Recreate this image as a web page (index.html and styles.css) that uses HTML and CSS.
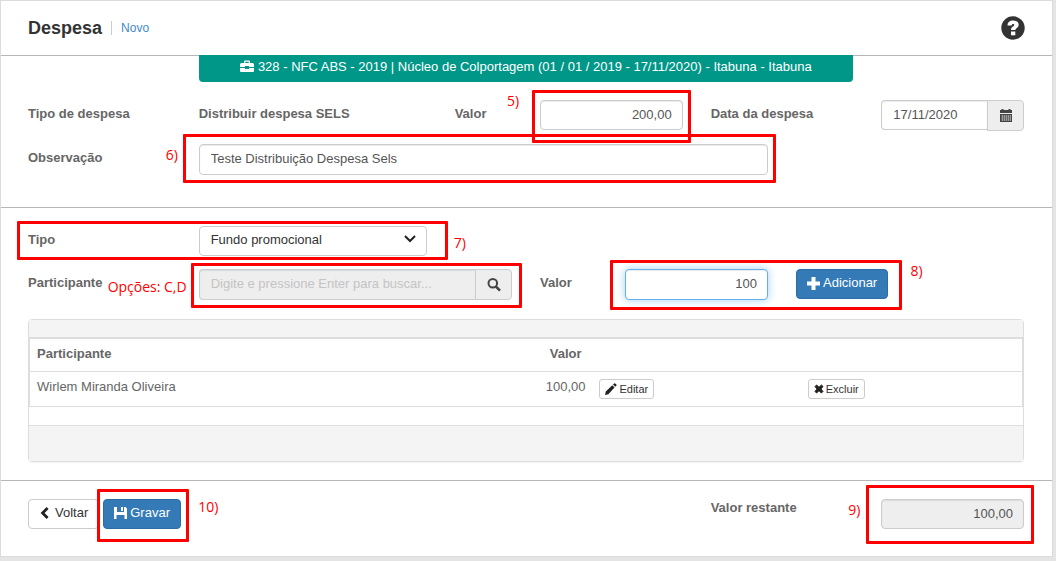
FILE: index.html
```html
<!DOCTYPE html>
<html lang="pt-BR">
<head>
<meta charset="utf-8">
<meta name="viewport" content="width=device-width, initial-scale=1">
<title>Despesa</title>
<link rel="stylesheet" href="styles.css">
</head>
<body>
<main class="page">
  <header class="header">
    <h1 class="title">Despesa</h1>
    <a class="subtitle" href="#">Novo</a>
    <button class="help" type="button" aria-label="Ajuda">
      <svg width="24" height="24" viewBox="0 0 24 24"><circle cx="12" cy="12" r="11.7" fill="#333"/><path d="M6.500 9.600C6.500 6.200 8.800 4.500 12.200 4.500c3.200 0 5.500 1.600 5.500 4.300 0 3.300-3.400 3.100-3.400 5.300h-4.300c0-3.600 3.200-3.400 3.200-5.100 0-.7-.5-1-1.200-1-.9 0-1.300.6-1.300 1.600z" fill="#fff"/><path d="M10 15.500h4.300v3.800H10z" fill="#fff"/></svg>
    </button>
  </header>

  <form class="form">
    <section class="section section-top">
      <div class="row">
        <div class="cell start-3 span-8">
          <div class="banner">
            <svg class="icon" width="14" height="13" viewBox="0 0 14 13" fill="#fff"><path d="M4 3V1.500Q4 .5 5 .5h4q1 0 1 1V3h2.500Q14 3 14 4.500V7H9V6H5v1H0V4.500Q0 3 1.500 3zM5.300 3h3.400V1.800H5.300zM0 8h5v1h4V8h5v3q0 1-1 1H1q-1 0-1-1z"/></svg>
            328 - NFC ABS - 2019 | Núcleo de Colportagem (01 / 01 / 2019 - 17/11/2020) - Itabuna - Itabuna
          </div>
        </div>
      </div>
      <div class="row row-main">
        <div class="cell span-2"><span class="label">Tipo de despesa</span></div>
        <div class="cell span-3"><span class="label">Distribuir despesa SELS</span></div>
        <div class="cell span-1">
          <label class="label" for="valor">Valor</label>
        </div>
        <div class="cell span-2">
          <input class="control number" id="valor" type="text" value="200,00">
          <span class="mark mark-5"></span><span class="note note-5">5)</span>
        </div>
        <div class="cell span-2"><label class="label" for="data">Data da despesa</label></div>
        <div class="cell span-2">
          <div class="group">
            <input class="control" id="data" type="text" value="17/11/2020">
            <button class="addon" type="button" aria-label="Abrir calendário">
              <svg width="14" height="14" viewBox="0 0 14 14"><path fill="#444" d="M1 1h1.500V0h2v1h5V0h2v1H13v3H1zM1 5h12v8H1z"/><path d="M2 7h10M2 9h10M2 11h10M3.500 6v6M5.500 6v6M7.500 6v6M9.500 6v6M11.500 6v6" stroke="#eee" stroke-width=".4"/></svg>
            </button>
          </div>
        </div>
      </div>
      <div class="row">
        <div class="cell span-2"><label class="label" for="obs">Observação</label></div>
        <div class="cell span-7">
          <input class="control tall" id="obs" type="text" value="Teste Distribuição Despesa Sels">
          <span class="mark mark-6"></span><span class="note note-6">6)</span>
        </div>
      </div>
    </section>

    <section class="section section-middle">
      <div class="row row-tipo">
        <div class="cell span-2"><label class="label" for="tipo">Tipo</label></div>
        <div class="cell span-3">
          <div class="select-box">
            <select class="control select" id="tipo"><option>Fundo promocional</option></select>
            <svg class="chevron" width="12" height="8" viewBox="0 0 12 8"><path d="M1 1l5 5 5-5" fill="none" stroke="#222" stroke-width="2"/></svg>
          </div>
          <span class="note note-7">7)</span>
        </div>
        <span class="mark mark-7"></span>
      </div>
      <div class="row">
        <div class="cell span-2"><label class="label" for="participante">Participante</label></div>
        <div class="cell span-4">
          <div class="group">
            <input class="control tall" id="participante" type="text" placeholder="Digite e pressione Enter para buscar..." disabled>
            <button class="addon" type="button" aria-label="Buscar">
              <svg width="14" height="14" viewBox="0 0 14 14" fill="none" stroke="#444"><circle cx="5.800" cy="5.300" r="4.300" stroke-width="2"/><path d="M9 8.600l4 4" stroke-width="2.600"/></svg>
            </button>
          </div>
          <span class="mark mark-search"></span><span class="note note-search">Opções: C,D</span>
        </div>
        <div class="cell span-1"><label class="label" for="valor-item">Valor</label></div>
        <div class="cell span-2"><input class="control tall number focused" id="valor-item" type="text" value="100"></div>
        <div class="cell span-2">
          <button class="button primary" type="button">
            <svg class="icon" width="13" height="13" viewBox="0 0 13 13"><path d="M4.500 0h4v4.500H13v4H8.500V13h-4V8.500H0v-4h4.500z" fill="#fff"/></svg>
            Adicionar
          </button>
          <span class="note note-8">8)</span>
        </div>
        <span class="mark mark-8"></span>
      </div>

      <div class="panel">
        <div class="panel-head"></div>
        <table class="table">
          <thead>
            <tr><th class="col-name">Participante</th><th class="col-value">Valor</th><th class="col-edit"></th><th></th></tr>
          </thead>
          <tbody>
            <tr>
              <td>Wirlem Miranda Oliveira</td>
              <td class="col-value">100,00</td>
              <td class="col-action"><button class="button small" type="button"><svg class="icon" width="12" height="12" viewBox="0 0 12 12" fill="#222"><path d="M0 12l.8-3.600L7.300 2.300l2.200 2.200L3.400 11.200zM8 1.600L9.200.4q.5-.4 1 0l1.200 1.200q.5.5 0 1L10.200 3.800z"/></svg>Editar</button></td>
              <td class="col-action"><button class="button small" type="button"><svg class="icon" width="10" height="10" viewBox="0 0 10 10"><path d="M1 2.600L2.600 1 5 3.300 7.400 1 9 2.600 6.900 5 9 7.400 7.400 9 5 6.700 2.600 9 1 7.400 3.100 5z" fill="#222" stroke="#222"/></svg>Excluir</button></td>
            </tr>
          </tbody>
        </table>
        <div class="panel-foot"></div>
      </div>
    </section>

    <section class="section section-bottom">
      <div class="row">
        <div class="cell span-8 actions">
          <button class="button" type="button"><svg class="icon" width="12" height="12" viewBox="0 0 12 12"><path d="M8.600 1L3.600 6l5 5" fill="none" stroke="#222" stroke-width="2.800"/></svg>Voltar</button>
          <div class="save">
            <button class="button primary" type="submit"><svg class="icon icon-save" width="13" height="13" viewBox="0 0 13 13" fill="#fff"><path d="M0 0h3v5h7V0h1.500L13 1.500V12h-2.500V8h-8v4H0z"/><path d="M7 0h2v4H7z"/></svg>Gravar</button>
            <span class="mark mark-10"></span><span class="note note-10">10)</span>
          </div>
        </div>
        <div class="cell span-2"><label class="label label-top" for="restante">Valor restante</label></div>
        <div class="cell span-2">
          <input class="control number" id="restante" type="text" value="100,00" readonly>
          <span class="mark mark-9"></span><span class="note note-9">9)</span>
        </div>
      </div>
    </section>
  </form>
</main>
</body>
</html>
```
FILE: styles.css
```css
* {
  box-sizing: border-box;
}

body {
  margin: 0;
  background: #e4e4e4;
  color: #666;
  font: 13px/18px "Liberation Sans", Arial, sans-serif;
}

.page {
  margin-right: 3px;
  border: 1px solid #dcdcdc;
  background: #fff;
}

.header {
  display: flex;
  align-items: center;
  height: 55px;
  padding: 0 27px;
  border-bottom: 1px solid #b7b7b7;
}

.title {
  margin: 0;
  padding-right: 9px;
  color: #333;
  font-size: 18px;
  line-height: 24px;
}

.subtitle {
  padding-left: 9px;
  border-left: 1px solid #ccc;
  color: #428bca;
  font-size: 12px;
  line-height: 14px;
  text-decoration: none;
}

.help {
  display: flex;
  margin-left: auto;
  padding: 0;
  border: 0;
  background: none;
}

.section {
  padding: 18px 14px 18px 13px;
  border-bottom: 1px solid #b7b7b7;
}

.section-top {
  margin-top: -1px;
  padding-top: 0;
  padding-bottom: 32px;
}

.section-bottom {
  padding-bottom: 27px;
  border-bottom: 0;
}

.row {
  position: relative;
  display: grid;
  grid-template-columns: repeat(12, 1fr);
  align-items: start;
}

.row-main {
  padding: 18px 0 13px;
}

.row-tipo {
  margin-bottom: 13px;
}

.cell {
  position: relative;
  min-width: 0;
  padding: 0 14px;
}

.span-1 { grid-column: span 1; }
.span-2 { grid-column: span 2; }
.span-3 { grid-column: span 3; }
.span-4 { grid-column: span 4; }
.span-7 { grid-column: span 7; }
.span-8 { grid-column: span 8; }
.start-3 { grid-column: 3 / span 8; }

.banner {
  padding: 3px 12px 6px;
  border-radius: 0 0 4px 4px;
  background: #009688;
  color: #fff;
  text-align: center;
}

.icon {
  flex: none;
  vertical-align: -2px;
}

.label {
  display: block;
  padding-top: 5px;
  font-weight: bold;
  white-space: nowrap;
}

.label-top {
  padding-top: 0;
}

.control {
  display: block;
  width: 100%;
  min-width: 0;
  height: 30px;
  margin: 0;
  padding: 0 10px 2px 11px;
  border: 1px solid #ccc;
  border-radius: 4px;
  outline: 0;
  background: #fff;
  box-shadow: inset 0 1px 1px rgba(0, 0, 0, 0.08);
  color: #555;
  font: inherit;
}

.control::placeholder {
  color: #c4c4c4;
  opacity: 1;
}

.control:disabled,
.control:read-only {
  background: #eee;
}

.tall {
  height: 31px;
}

.number {
  text-align: right;
}

.focused {
  border-color: #66afe9;
  box-shadow: inset 0 1px 1px rgba(0, 0, 0, 0.08), 0 0 8px rgba(102, 175, 233, 0.6);
}

.select-box {
  position: relative;
}

.control.select {
  appearance: none;
  background: #fff;
  box-shadow: none;
  color: #333;
}

.chevron {
  position: absolute;
  top: 9px;
  right: 11px;
  pointer-events: none;
}

.group {
  display: flex;
  align-items: flex-start;
}

.group .control {
  flex: 1;
  border-right: 0;
  border-radius: 4px 0 0 4px;
}

.addon {
  display: flex;
  flex: none;
  align-items: center;
  justify-content: center;
  width: 37px;
  height: 31px;
  padding: 0;
  border: 1px solid #ccc;
  border-radius: 0 4px 4px 0;
  background: #eee;
}

.button {
  display: inline-flex;
  align-items: center;
  gap: 4px;
  height: 30px;
  padding: 0 10px 2px;
  border: 1px solid #ccc;
  border-radius: 4px;
  background: #fff;
  color: #333;
  font: inherit;
  white-space: nowrap;
}

.primary {
  gap: 3px;
  border-color: #2e6da4;
  background: #337ab7;
  color: #fff;
}

.small {
  gap: 2px;
  height: 20px;
  padding: 0 5px;
  border-radius: 3px;
  font-size: 11px;
}

.panel {
  margin: 19px 14px 0;
  border: 1px solid #ddd;
  border-radius: 4px;
  box-shadow: 0 1px 1px rgba(0, 0, 0, 0.05);
}

.panel-head {
  height: 18px;
  border-bottom: 1px solid #ddd;
  background: #f4f4f4;
}

.table {
  width: 100%;
  border: 1px solid #ddd;
  border-collapse: separate;
  border-spacing: 0;
  table-layout: fixed;
}

.table th,
.table td {
  padding: 6px 7px;
  text-align: left;
  vertical-align: top;
}

.table th {
  height: 33px;
  border-bottom: 1px solid #ddd;
}

.table td {
  height: 34px;
}

.table .col-name {
  width: 51%;
}

.table .col-value {
  width: 6%;
  text-align: center;
}

.table .col-edit {
  width: 21%;
}

.table .col-action {
  padding: 7px 4px;
  line-height: 0;
}

.panel-foot {
  height: 54px;
  border-top: 18px solid #fff;
  background: #f4f4f4;
  box-shadow: inset 0 1px #ddd;
}

.actions {
  display: flex;
  gap: 4px;
}

.save {
  position: relative;
}

/* Step annotations drawn around the controls */
.mark {
  position: absolute;
  border: 3px solid #f00;
  border-radius: 1px;
  pointer-events: none;
}

.note {
  position: absolute;
  color: #f00;
  font: 14px/18px "Open Sans", "Noto Sans", sans-serif;
  white-space: nowrap;
}

.mark-5 { inset: -10px 6px -13px 6px; }
.note-5 { top: -8px; left: -19px; }
.mark-6 { inset: -10px 6px -8px -2px; }
.note-6 { top: 2px; left: -19px; }
.mark-7 { top: -5px; bottom: -4px; left: 3px; width: 431px; }
.note-7 { top: 8px; left: 100%; margin-left: 13px; }
.mark-search { inset: -6px 4px -8px 6px; }
.note-search { top: 9px; right: 100%; margin-right: -2px; }
.mark-8 { inset: -9px 136px -10px 58.200%; }
.note-8 { top: -7px; right: 30px; }
.mark-9 { inset: -14px 4px -15px -1px; }
.note-9 { top: 2px; left: -19px; }
.mark-10 { inset: -10px -8px -13px -6px; }
.note-10 { top: -1px; left: 95px; }
```
